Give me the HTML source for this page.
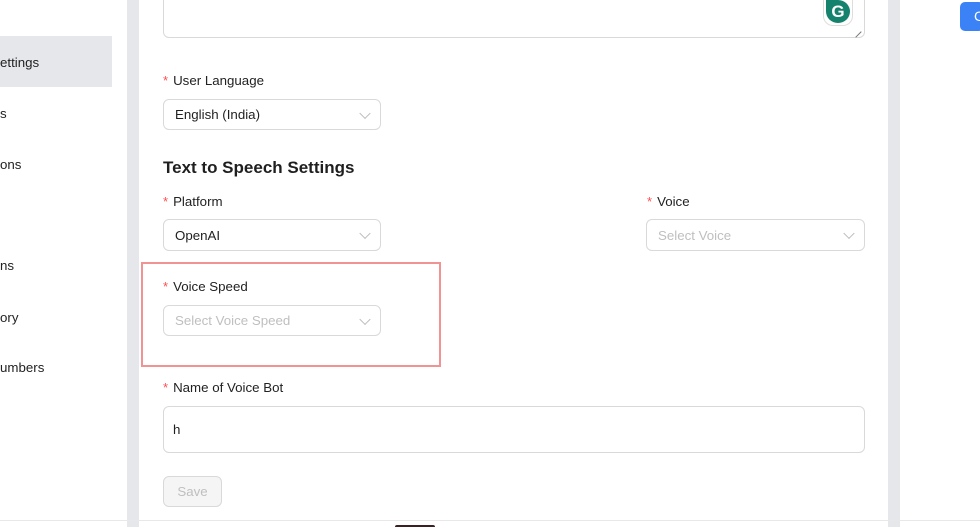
<!DOCTYPE html>
<html><head><meta charset="utf-8"><style>
*{box-sizing:border-box;margin:0;padding:0}
body{width:980px;height:527px;overflow:hidden;background:#fff;font-family:"Liberation Sans",sans-serif;color:#1f1f1f;position:relative;font-size:13.3px}
.a{position:absolute}
.sb{left:0;top:0;width:127px;height:527px;background:#fff}
.nav{left:0;font-size:13.3px;color:#222}
.strip{background:#e5e7eb;top:0;height:527px}
.lbl{font-size:13.3px;color:#222}
.lbl b{color:#ff4d4f;font-weight:normal;margin-right:5px;font-size:13px}
.sel{border:1px solid #d9d9d9;border-radius:6px;background:#fff;font-size:13.3px;padding-left:11px;display:flex;align-items:center}
.ph{color:#bfbfbf}
.chev{position:absolute;right:11px;top:50%;width:8px;height:8px;border-right:1px solid #bbb;border-bottom:1px solid #bbb;transform:translateY(-70%) rotate(45deg)}
</style></head><body>
<div class="a sb"></div>
<div class="a" style="left:0;top:36px;width:112px;height:51px;background:#e5e7eb"></div>
<div class="a nav" style="top:55px">ettings</div>
<div class="a nav" style="top:106px">s</div>
<div class="a nav" style="top:157px">ons</div>
<div class="a nav" style="top:258px">ns</div>
<div class="a nav" style="top:310px">ory</div>
<div class="a nav" style="top:360px">umbers</div>
<div class="a strip" style="left:127px;width:12px"></div>
<div class="a strip" style="left:888px;width:12px"></div>
<div class="a" style="left:0;top:520px;width:980px;height:1px;background:#e8e8e8"></div>
<div class="a" style="left:395px;top:525px;width:40px;height:2px;background:#3a2222;border-radius:2px 2px 0 0"></div>
<div class="a" style="left:960px;top:2px;width:24px;height:29px;background:#3b82f6;border-radius:5px;color:#fff;font-size:14px;padding:6px 0 0 14px">C</div>

<div class="a" style="left:163px;top:-10px;width:702px;height:48px;border:1px solid #d9d9d9;border-radius:0 0 6px 6px"></div>
<div class="a" style="left:823px;top:0;width:30px;height:26px;background:#fff;border:1px solid #ddd;border-top:none;border-radius:0 0 10px 10px"></div>
<div class="a" style="left:826px;top:0;width:24px;height:23px;background:#15826e;border-radius:0 50% 50% 50%;color:#fff;font-weight:bold;font-size:17px;text-align:center;line-height:23px">G</div>
<div class="a" style="left:852px;top:28px;width:8px;height:8px;border-bottom:1px solid #777;transform:rotate(-45deg)"></div>

<div class="a lbl" style="left:163px;top:73px"><b>*</b>User Language</div>
<div class="a sel" style="left:163px;top:99px;width:218px;height:31px">English (India)<span class="chev"></span></div>
<div class="a" style="left:163px;top:158px;font-size:17px;font-weight:bold;color:#1f1f1f">Text to Speech Settings</div>
<div class="a lbl" style="left:163px;top:194px"><b>*</b>Platform</div>
<div class="a sel" style="left:163px;top:219px;width:218px;height:32px">OpenAI<span class="chev"></span></div>
<div class="a lbl" style="left:647px;top:194px"><b>*</b>Voice</div>
<div class="a sel ph" style="left:646px;top:219px;width:219px;height:32px">Select Voice<span class="chev"></span></div>
<div class="a" style="left:141px;top:262px;width:300px;height:105px;border:2px solid #f29393"></div>
<div class="a lbl" style="left:163px;top:279px"><b>*</b>Voice Speed</div>
<div class="a sel ph" style="left:163px;top:305px;width:218px;height:31px">Select Voice Speed<span class="chev"></span></div>
<div class="a lbl" style="left:163px;top:380px"><b>*</b>Name of Voice Bot</div>
<div class="a sel" style="left:163px;top:406px;width:702px;height:47px;padding-left:9px">h</div>
<div class="a" style="left:163px;top:476px;width:59px;height:31px;border:1px solid #d9d9d9;border-radius:6px;background:#f5f5f5;color:#bfbfbf;text-align:center;line-height:30px">Save</div>
</body></html>
